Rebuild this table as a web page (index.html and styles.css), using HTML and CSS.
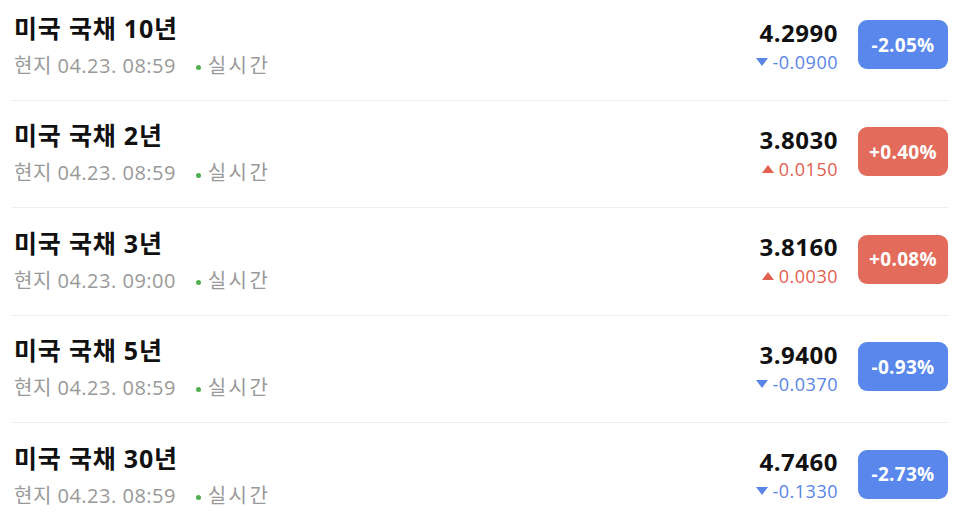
FILE: index.html
```html
<!DOCTYPE html>
<html lang="ko">
<head>
  <meta charset="UTF-8">
  <title>미국 국채</title>
  <link rel="stylesheet" href="styles.css">
</head>
<body>
  <ul class="bond-list">
    <li class="bond-item">
      <div class="info">
        <div class="name">미국 국채 10년</div>
        <div class="meta">현지 04.23. 08:59 <span class="live"><i class="dot"></i>실시간</span></div>
      </div>
      <div class="price down">
        <div class="value">4.2990</div>
        <div class="change"><i class="arrow"></i>-0.0900</div>
      </div>
      <div class="badge down">-2.05%</div>
    </li>
    <li class="bond-item">
      <div class="info">
        <div class="name">미국 국채 2년</div>
        <div class="meta">현지 04.23. 08:59 <span class="live"><i class="dot"></i>실시간</span></div>
      </div>
      <div class="price up">
        <div class="value">3.8030</div>
        <div class="change"><i class="arrow"></i>0.0150</div>
      </div>
      <div class="badge up">+0.40%</div>
    </li>
    <li class="bond-item">
      <div class="info">
        <div class="name">미국 국채 3년</div>
        <div class="meta">현지 04.23. 09:00 <span class="live"><i class="dot"></i>실시간</span></div>
      </div>
      <div class="price up">
        <div class="value">3.8160</div>
        <div class="change"><i class="arrow"></i>0.0030</div>
      </div>
      <div class="badge up">+0.08%</div>
    </li>
    <li class="bond-item">
      <div class="info">
        <div class="name">미국 국채 5년</div>
        <div class="meta">현지 04.23. 08:59 <span class="live"><i class="dot"></i>실시간</span></div>
      </div>
      <div class="price down">
        <div class="value">3.9400</div>
        <div class="change"><i class="arrow"></i>-0.0370</div>
      </div>
      <div class="badge down">-0.93%</div>
    </li>
    <li class="bond-item">
      <div class="info">
        <div class="name">미국 국채 30년</div>
        <div class="meta">현지 04.23. 08:59 <span class="live"><i class="dot"></i>실시간</span></div>
      </div>
      <div class="price down">
        <div class="value">4.7460</div>
        <div class="change"><i class="arrow"></i>-0.1330</div>
      </div>
      <div class="badge down">-2.73%</div>
    </li>
  </ul>
</body>
</html>
```

FILE: styles.css
```css
body {
  margin: 0;
  padding: 0;
  background: #fff;
  font-family: "Open Sans", "Noto Sans CJK KR", sans-serif;
  color: #111;
  overflow: hidden;
}
.bond-list {
  list-style: none;
  margin: -6.6px 12px 0 12px;
  padding: 0;
}
.bond-item {
  display: flex;
  align-items: center;
  height: 106.4px;
  border-bottom: 1px solid #eeeeee;
  padding-left: 2px;
}
.info {
  flex: 1;
  display: flex;
  flex-direction: column;
  gap: 6px;
  margin-top: 1px;
}
.name {
  font-size: 25px;
  font-weight: bold;
  line-height: 32px;
  letter-spacing: 0.8px;
  color: #111;
}
.meta {
  font-size: 20px;
  line-height: 32px;
  letter-spacing: 0.5px;
  color: #999;
}
.live {
  margin-left: 14px;
  letter-spacing: 2.5px;
}
.dot {
  display: inline-block;
  width: 5px;
  height: 5px;
  border-radius: 50%;
  background: #4caf50;
  margin-right: 7px;
  vertical-align: middle;
}
.price {
  display: flex;
  flex-direction: column;
  align-items: flex-end;
  gap: 1px;
  margin-top: -3px;
}
.value {
  font-size: 24px;
  font-weight: bold;
  line-height: 32px;
  letter-spacing: 0.5px;
  color: #111;
}
.change {
  font-size: 18px;
  line-height: 24px;
  letter-spacing: 0.5px;
  display: flex;
  align-items: center;
}
.arrow {
  width: 0;
  height: 0;
  border-left: 6px solid transparent;
  border-right: 6px solid transparent;
  margin-right: 5px;
}
.price.down .change {
  color: #5a84e8;
}
.price.down .arrow {
  border-top: 8px solid #5a84e8;
}
.price.up .change {
  color: #e2604f;
}
.price.up .arrow {
  border-bottom: 8px solid #e2604f;
}
.badge {
  width: 90px;
  height: 49px;
  margin-left: 20px;
  margin-top: -4px;
  border-radius: 9px;
  display: flex;
  align-items: center;
  justify-content: center;
  color: #fff;
  font-size: 19px;
  font-weight: bold;
  letter-spacing: 0.3px;
}
.badge.down {
  background: #5a87ec;
}
.badge.up {
  background: #e26b5b;
}
```
